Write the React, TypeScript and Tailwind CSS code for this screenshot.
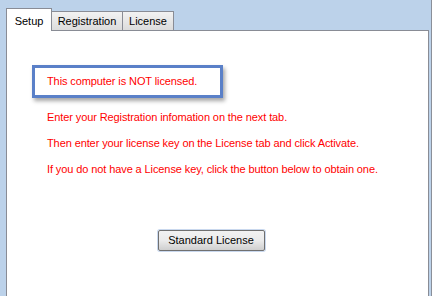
import React from "react";

export default function App() {
  return (
    <div
      className="relative h-[296px] w-[432px] overflow-hidden bg-[#bcd2ea] text-[11px] text-black"
      style={{ fontFamily: '"Liberation Sans", Arial, sans-serif' }}
    >
      {/* window edge on the right */}
      <div className="absolute right-0 top-0 h-full w-px bg-[#8a8f99]" />

      <div className="flex flex-col pl-[6px] pt-[8px] pr-[3px]">
        {/* tab strip */}
        <div className="flex h-[22px] items-end">
          <div className="relative z-10 -mb-px flex h-[23px] w-[46px] items-start justify-center border border-b-0 border-[#898c95] bg-white pt-[4px]">
            Setup
          </div>
          <div className="flex h-[19px] w-[71px] items-center justify-center border border-b-0 border-l-0 border-[#898c95] bg-gradient-to-b from-[#f2f2f2] to-[#dcdcdc]">
            Registration
          </div>
          <div className="flex h-[19px] w-[51px] items-center justify-center border border-b-0 border-l-0 border-[#898c95] bg-gradient-to-b from-[#f2f2f2] to-[#dcdcdc]">
            License
          </div>
        </div>

        {/* panel */}
        <div className="flex h-[280px] flex-col border border-[#898c95] bg-white text-[#ff0000] tracking-[-0.1px]">
          <div className="ml-[25px] mt-[34px] flex h-[33px] w-[191px] items-center border-[3px] border-[#5a80c8] pl-[12px] shadow-[2px_3px_4px_rgba(0,0,0,0.35)]">
            This computer is NOT licensed.
          </div>
          <div className="ml-[40px] mt-[13px] flex flex-col gap-[13px] leading-[13px]">
            <p>Enter your Registration infomation on the next tab.</p>
            <p>Then enter your license key on the License tab and click Activate.</p>
            <p>If you do not have a License key, click the button below to obtain one.</p>
          </div>
          <div className="mt-[54px] flex justify-center pr-[13px]">
            <button className="h-[21px] w-[107px] rounded-[2px] border border-[#707070] bg-gradient-to-b from-[#f2f2f2] via-[#ebebeb] to-[#cfcfcf] text-black tracking-normal shadow-[0_0_0_1px_#c9d8ee]">
              Standard License
            </button>
          </div>
        </div>
      </div>
    </div>
  );
}
